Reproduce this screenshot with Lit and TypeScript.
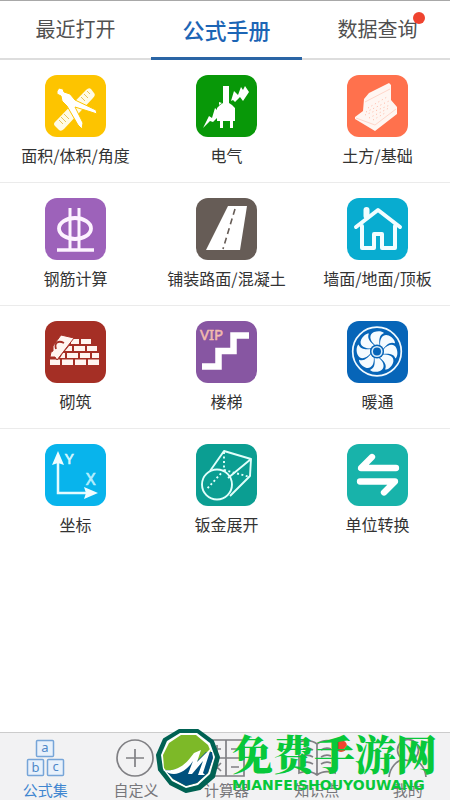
import { LitElement, html, css, svg } from "lit";
import { customElement, property, state } from "lit/decorators.js";
import { classMap } from "lit/directives/class-map.js";

const blades = [0, 45, 90, 135, 180, 225, 270, 315];

const art: Record<string, unknown> = {
  measure: svg`
    <path d="M10 47 41 15Q44 12 46 14L49 18Q51 20 48 23L19 54Q16 57 14 55L10 51Q8 49 10 47Z" fill="#fffbe6"/>
    <path d="M14 45l4 4M16 42l5 5M19 39l5 5M36 22l4 4M39 19l4 4M42 16l3 3" stroke="#e9c65a" stroke-width="1"/>
    <path d="M14 13 18 14 19 17 25 19 30 25 51 35 52 39 46 37 30 32 38 48 37 54 33 50 22 31 17 26 16 21 12 19 12 16Z" fill="#fff" stroke="#fdc400" stroke-width="1"/>`,
  electric: svg`
    <path d="M27 11H33V28L36 30 39 33V46H37V53H34V46H27V53H24V46H21V33L24 30 27 28Z" fill="#fff"/>
    <path d="M35 26 38 16 42 20 45 12 47 15 49 11 53 17 47 26 44 22 39 27 37 25Z" fill="#fff"/>
    <path d="M7 53 13 41 16 43 19 33 21 35V43L17 47 14 46Z" fill="#fff"/>
    <path d="M23 30V27L26 28" fill="#fff"/>`,
  earth: svg`
    <path d="M8 42 16 36 17 24 22 18 42 8 44 10 44 25 50 32V39L28 56 8 44Z" fill="#fff6f2"/>
    <path d="M9 43 28 50 49 34M18 27 43 14" fill="none" stroke="#ffd6ca" stroke-width="1"/>
    <path d="M21 33 40 22M19 37 42 26M18 40 43 30M22 43 42 33M26 45 38 38" stroke="#ffb7a3" stroke-width="1" stroke-dasharray="1 3"/>`,
  rebar: svg`<g fill="none" stroke="#fdf3ff" stroke-width="3">
    <path d="M25 10V51M34 10V51"/><path d="M12 52H49" stroke-width="3.5"/>
    <ellipse cx="30" cy="30.5" rx="16" ry="10.500" stroke-width="3.800"/></g>`,
  road: svg`<path d="M32 8H51L44 52H10Z" fill="#fff"/>
    <path d="M39 11 27 51" stroke="#665c56" stroke-width="1.600" stroke-dasharray="6 4"/>`,
  house: svg`<g fill="none" stroke="#f2fdff" stroke-width="4" stroke-linejoin="round" stroke-linecap="round">
    <path d="M9 29 31 12 53 29"/><path d="M15 28V50H27V36H35V50H48V28"/>
    <path d="M19.500 18V12" stroke-width="6"/></g>`,
  brick: svg`<g fill="#fff5f0">
    <path d="M26 18H34V23H26ZM36 18H46V23H36ZM24 25H27V30H20ZM29 25H40V30H29ZM42 25H52V30H42ZM18 32H20V37H15ZM22 32H33V37H22ZM35 32H45V37H35ZM47 32H54V37H47ZM5 38.500H15V44H5ZM17 38.500H28V44H17ZM30 38.500H41V44H30ZM43 38.500H54V44H43Z"/>
    <path d="M16 14 29 17 12 39 10 36 5 36 6 31 8 30 8 25Z" stroke="#a52f25" stroke-width="1"/></g>
    <path d="M11 28C9 22 13 19 19 22" fill="none" stroke="#a52f25" stroke-width="1.800"/>`,
  stairs: svg`<path d="M6 45.500H22.500V30H37.500V14.500H53" fill="none" stroke="#fff" stroke-width="6.500"/>
    <text x="4" y="19" font-size="15" fill="#f3bcae" stroke="#f3bcae" stroke-width=".5">VIP</text>`,
  fan: svg`<circle cx="30" cy="30.500" r="24.300" fill="none" stroke="#f2faff" stroke-width="1.700"/>
    ${blades.map((a) => svg`<path transform=${`rotate(${a} 30 30.5)`} d="M28 24C22 19 22 13 27 11C31 9.500 35 10 37 12C32 14 32 19 32.500 24Z" fill="#f5fbff"/>`)}
    <circle cx="30" cy="30.500" r="7" fill="#0765b8"/>
    <circle cx="30" cy="30.500" r="4.800" fill="none" stroke="#d9ecfa" stroke-width="1.600"/>`,
  axes: svg`<path d="M13 18V49H42" fill="none" stroke="#e6fbff" stroke-width="2.500"/>
    <path d="M13 7 19 21 13 19 7 21ZM53 49 39 55 41 49 39 43Z" fill="#f0fdff"/>
    <text x="20" y="20" font-size="15" fill="#d5f7ff" stroke="#d5f7ff" stroke-width=".7">Y</text>
    <text x="41" y="41" font-size="16" fill="#b5efff" stroke="#b5efff" stroke-width=".7">X</text>`,
  sheet: svg`<g fill="none" stroke="#e2fffb" stroke-width="1.900" stroke-linejoin="round">
    <circle cx="21" cy="40.500" r="15"/><path d="M14 27 28 7 55 15 54 32 34 52M32 34 55 15"/>
    <path d="M28 8V26L54 33M28 26 10 46" stroke-dasharray="2 2.500"/></g>`,
  convert: svg`<path d="M49 24H14L25 13M13 37.500H48L37 48.500" fill="none" stroke="#fff" stroke-width="6.300" stroke-linecap="round" stroke-linejoin="round"/>`,

  blocks: svg`<g stroke="#76a5d8" stroke-width="1.500" fill="#e8f1fb">
    <rect x="10.500" y="1.500" width="17" height="16" rx="1"/><rect x="1.500" y="20.500" width="16" height="16" rx="1"/><rect x="21.500" y="20.500" width="16" height="16" rx="1"/></g>
    <g font-size="13" fill="#4f88c8" text-anchor="middle"><text x="19" y="13">a</text><text x="9.500" y="33">b</text><text x="29.500" y="32">c</text></g>`,
  plus: svg`<circle cx="19" cy="19" r="18"/><path d="M19 10V28M10 19H28"/>`,
  calc: svg`<path d="M1 1H37V37H1ZM19 1V37M1 19H37M6 10H14M10 6V14M6 24L14 32M14 24L6 32M24 10H32M24 28H32"/>`,
  book: svg`<path d="M19 5C14 1 7 1 1 3V34C7 32 14 32 19 36C24 32 31 32 37 34V3C31 1 24 1 19 5V36M5 10Q10 8 15 11M5 17Q10 15 15 18M5 24Q10 22 15 25M23 11Q28 8 33 10M23 18Q28 15 33 17M23 25Q28 22 33 24"/>`,
  person: svg`<circle cx="20" cy="11" r="10.500"/><path d="M1 38C2 28 9 22 15 20M25 20C31 22 37 28 38 38"/>`,
};

const formulas = [
  { icon: "measure", color: "#fdc400", label: "面积/体积/角度" },
  { icon: "electric", color: "#089808", label: "电气" },
  { icon: "earth", color: "#ff714d", label: "土方/基础" },
  { icon: "rebar", color: "#9d62ba", label: "钢筋计算" },
  { icon: "road", color: "#665c56", label: "铺装路面/混凝土" },
  { icon: "house", color: "#08acd0", label: "墙面/地面/顶板" },
  { icon: "brick", color: "#a52f25", label: "砌筑" },
  { icon: "stairs", color: "#8756a2", label: "楼梯" },
  { icon: "fan", color: "#0765b8", label: "暖通" },
  { icon: "axes", color: "#08b4ec", label: "坐标" },
  { icon: "sheet", color: "#0b9e92", label: "钣金展开" },
  { icon: "convert", color: "#18b3aa", label: "单位转换" },
];

const sections = [
  { icon: "blocks", label: "公式集" },
  { icon: "plus", label: "自定义" },
  { icon: "calc", label: "计算器" },
  { icon: "book", label: "知识点", badge: true },
  { icon: "person", label: "我的" },
];

const tabs = ["最近打开", "公式手册", "数据查询"];

@customElement("formula-tile")
class FormulaTile extends LitElement {
  @property() icon = "";
  @property() color = "";
  @property() label = "";

  static styles = css`
    :host { display: block; }
    .tile {
      display: flex; flex-direction: column; align-items: center; gap: 6px;
      width: 100%; padding: 15px 0 14px; margin: 0; border: 0; background: none;
      font: inherit; font-size: 16px; line-height: 24px; color: #333; white-space: nowrap; cursor: pointer;
    }
    .icon { display: block; width: 61px; height: 62px; font-family: "Noto Sans", sans-serif; }
  `;

  render() {
    return html`<button class="tile">
      <svg class="icon" viewBox="0 0 61 62" aria-hidden="true">
        <rect width="61" height="62" rx="12" fill=${this.color}></rect>${art[this.icon]}
      </svg>
      <span>${this.label}</span>
    </button>`;
  }
}

@customElement("site-mark")
class SiteMark extends LitElement {
  static styles = css`
    :host { display: flex; align-items: flex-start; color: #08c83a; white-space: nowrap; }
    .logo { width: 66px; height: 66px; flex: none; }
    .words { display: flex; flex-direction: column; padding-left: 11px; }
    .name { font: 900 41px/50px "Noto Serif CJK SC", "Noto Sans CJK SC", sans-serif; }
    .site { font: 700 14px/14px "DejaVu Sans", sans-serif; }
  `;

  render() {
    return html`
      <svg class="logo" viewBox="0 0 66 66" aria-hidden="true">
        <path d="M24 2H43L58 13 64 29 59 49 45 61 31 64 15 56 4 42 2 27 9 11Z" fill="#006253" stroke="#006253" stroke-width="2" stroke-linejoin="round"/>
        <path d="M25 5H42L55 15 60 29 55 46 43 57 31 60 17 53 8 41 6 27 12 13Z" fill="#fff"/>
        <path d="M26 7H41L53 17 58 29 53 45 42 55 31 58 18 51 9 40 8 27 14 15Z" fill="#7db928"/>
        <path d="M10 42C24 43 31 38 39 26L44 25 41 34 51 24 57 24 58 30 53 45 42 55 31 58 18 51Z" fill="#00517d"/>
        <path d="M8 42C23 44 31 36 39 25L46 22 42 34 56 20 48 45 50 47 43 47 48 33 37 46 33 46 38 33C30 45 19 50 8 42Z" fill="#fff"/>
      </svg>
      <div class="words"><span class="name">免费手游网</span><span class="site">MIANFEISHOUYOUWANG</span></div>`;
  }
}

@customElement("app-root")
class AppRoot extends LitElement {
  @state() private tab = 1;
  @state() private section = 0;

  static styles = css`
    :host {
      display: block; position: relative; overflow: hidden; background: #fff;
      font-family: "Noto Sans CJK SC", sans-serif;
    }
    * { box-sizing: border-box; }
    button { margin: 0; padding: 0; border: 0; background: none; font: inherit; cursor: pointer; }
    .page { display: flex; flex-direction: column; min-height: 100vh; margin-right: -3px; border-top: 1px solid #a8a8a8; }
    .tabs { display: grid; grid-template-columns: repeat(3, 1fr); height: 59px; border-bottom: 2px solid #ddd; }
    .tab { height: 59px; padding-bottom: 1px; border-bottom: 3px solid transparent; font-size: 20px; color: #505050; }
    .tab.active { border-color: #2a65a5; font-size: 22px; font-weight: 500; color: #1c65b5; }
    .anchor { position: relative; }
    .dot { position: absolute; width: 12px; height: 12px; border-radius: 50%; background: #ef432f; }
    .tab .dot { top: -2px; right: -7px; }
    .grid { display: grid; grid-template-columns: repeat(3, 1fr); flex: 1; align-content: start; }
    .cell { height: 123px; border-bottom: 1px solid #ebebeb; }
    .cell:nth-last-child(-n + 3) { border-color: transparent; }
    .nav { display: grid; grid-template-columns: repeat(5, 1fr); height: 68px; border-top: 1px solid #ccc; background: #f2f2f3; }
    .item {
      display: flex; flex-direction: column; align-items: center; gap: 2px; padding-top: 6px;
      font-size: 15px; line-height: 20px; color: #77777b;
    }
    .item.active { color: #4086d0; }
    .glyph {
      display: block; width: 39px; height: 39px; fill: none; stroke: #808084; stroke-width: 1.7;
      font-family: "Noto Sans", sans-serif;
    }
    .glyph text { stroke: none; }
    .item .dot { top: 1px; right: -10px; }
    .mark { position: absolute; left: 155px; bottom: 6px; }
  `;

  render() {
    return html`
      <div class="page">
        <div class="tabs" role="tablist">
          ${tabs.map((t, i) => html`<button role="tab" aria-selected=${this.tab === i}
            class=${classMap({ tab: true, active: this.tab === i })} @click=${() => (this.tab = i)}>
            <span class="anchor">${t}${i === 2 ? html`<i class="dot"></i>` : ""}</span>
          </button>`)}
        </div>
        <main class="grid">
          ${formulas.map((f) => html`<formula-tile class="cell" .icon=${f.icon} .color=${f.color} .label=${f.label}></formula-tile>`)}
        </main>
        <nav class="nav">
          ${sections.map((s, i) => html`<button class=${classMap({ item: true, active: this.section === i })}
            @click=${() => (this.section = i)}>
            <span class="anchor"><svg class="glyph" viewBox="0 0 39 39" aria-hidden="true">${art[s.icon]}</svg>
            ${s.badge ? html`<i class="dot"></i>` : ""}</span>
            <span>${s.label}</span>
          </button>`)}
        </nav>
      </div>
      <site-mark class="mark"></site-mark>`;
  }
}
